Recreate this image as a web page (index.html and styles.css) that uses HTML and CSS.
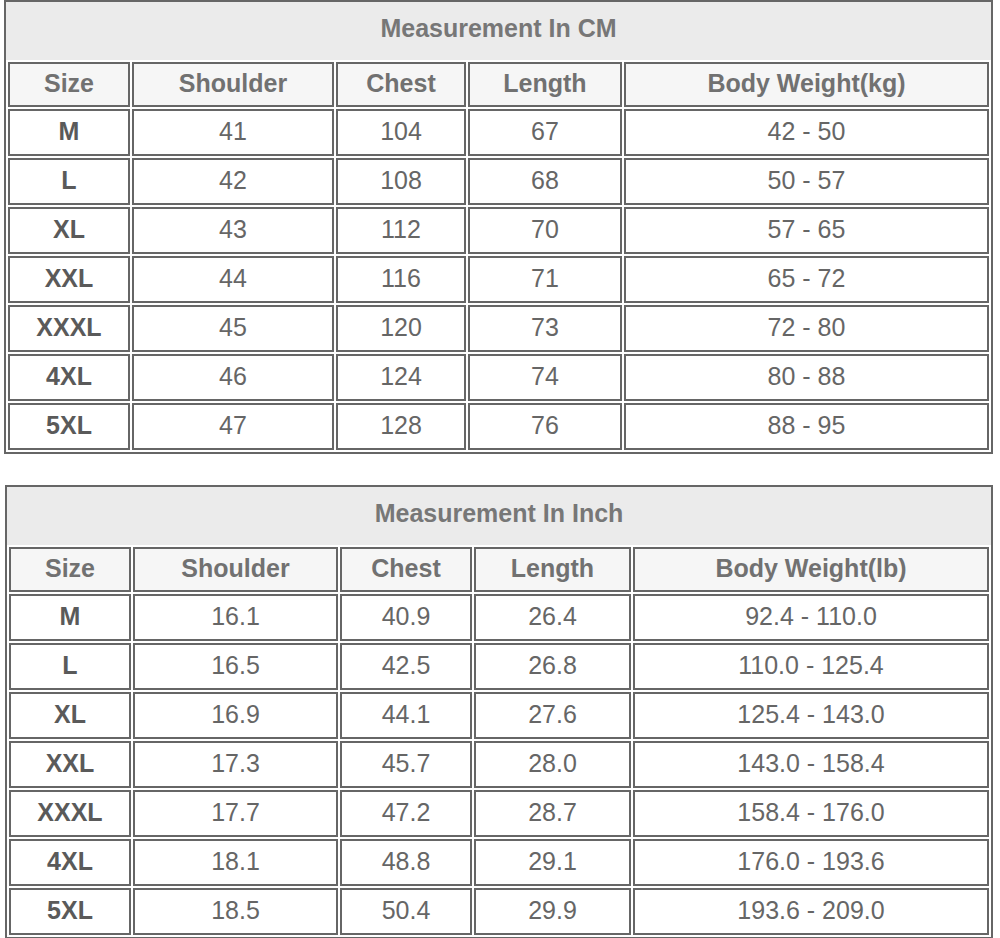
FILE: index.html
```html
<!DOCTYPE html>
<html lang="en">
<head>
<meta charset="utf-8">
<title>Size Chart</title>
<link rel="stylesheet" href="styles.css">
</head>
<body>
<div class="page">
  <section class="chart chart-cm">
    <div class="title">Measurement In CM</div>
    <table>
      <thead>
        <tr><th class="c-size">Size</th><th class="c-shoulder">Shoulder</th><th class="c-chest">Chest</th><th class="c-length">Length</th><th class="c-weight">Body Weight(kg)</th></tr>
      </thead>
      <tbody>
        <tr><td class="sz">M</td><td>41</td><td>104</td><td>67</td><td>42 - 50</td></tr>
        <tr><td class="sz">L</td><td>42</td><td>108</td><td>68</td><td>50 - 57</td></tr>
        <tr><td class="sz">XL</td><td>43</td><td>112</td><td>70</td><td>57 - 65</td></tr>
        <tr><td class="sz">XXL</td><td>44</td><td>116</td><td>71</td><td>65 - 72</td></tr>
        <tr><td class="sz">XXXL</td><td>45</td><td>120</td><td>73</td><td>72 - 80</td></tr>
        <tr><td class="sz">4XL</td><td>46</td><td>124</td><td>74</td><td>80 - 88</td></tr>
        <tr><td class="sz">5XL</td><td>47</td><td>128</td><td>76</td><td>88 - 95</td></tr>
      </tbody>
    </table>
  </section>

  <section class="chart chart-inch">
    <div class="title">Measurement In Inch</div>
    <table>
      <thead>
        <tr><th class="c-size">Size</th><th class="c-shoulder">Shoulder</th><th class="c-chest">Chest</th><th class="c-length">Length</th><th class="c-weight">Body Weight(lb)</th></tr>
      </thead>
      <tbody>
        <tr><td class="sz">M</td><td>16.1</td><td>40.9</td><td>26.4</td><td>92.4 - 110.0</td></tr>
        <tr><td class="sz">L</td><td>16.5</td><td>42.5</td><td>26.8</td><td>110.0 - 125.4</td></tr>
        <tr><td class="sz">XL</td><td>16.9</td><td>44.1</td><td>27.6</td><td>125.4 - 143.0</td></tr>
        <tr><td class="sz">XXL</td><td>17.3</td><td>45.7</td><td>28.0</td><td>143.0 - 158.4</td></tr>
        <tr><td class="sz">XXXL</td><td>17.7</td><td>47.2</td><td>28.7</td><td>158.4 - 176.0</td></tr>
        <tr><td class="sz">4XL</td><td>18.1</td><td>48.8</td><td>29.1</td><td>176.0 - 193.6</td></tr>
        <tr><td class="sz">5XL</td><td>18.5</td><td>50.4</td><td>29.9</td><td>193.6 - 209.0</td></tr>
      </tbody>
    </table>
  </section>
</div>
</body>
</html>
```
FILE: styles.css
```css
html, body {
  margin: 0;
  padding: 0;
  background: #ffffff;
}

body {
  font-family: "Liberation Sans", Arial, sans-serif;
  color: #666666;
}

.page {
  display: flex;
  flex-direction: column;
  gap: 31px;
  padding: 0 7px 0 4px;
}

.chart {
  border: 2px solid #666666;
  background: #ffffff;
}

.chart-inch {
  margin-left: 1px;
}

.title {
  box-sizing: border-box;
  height: 58px;
  padding-bottom: 5px;
  background: #ebebeb;
  display: flex;
  align-items: center;
  justify-content: center;
  font-weight: bold;
  font-size: 25px;
  color: #777777;
}

.chart table {
  width: 100%;
  table-layout: fixed;
  border-collapse: separate;
  border-spacing: 2px;
  margin: 0;
}

.chart th,
.chart td {
  box-sizing: border-box;
  border: 2px solid #666666;
  padding: 0 0 4px 0;
  text-align: center;
  vertical-align: middle;
  font-size: 25px;
  line-height: 28px;
}

.chart th {
  height: 45px;
  background: #f6f6f6;
  font-weight: bold;
  color: #717171;
}

.chart td {
  height: 47px;
  background: #ffffff;
  color: #666666;
}

.chart td.sz {
  font-weight: bold;
  color: #5a5a5a;
}

.chart-cm .c-size { width: 122px; }
.chart-cm .c-shoulder { width: 202px; }
.chart-cm .c-chest { width: 130px; }
.chart-cm .c-length { width: 154px; }
.chart-cm .c-weight { width: 365px; }

.chart-inch .c-size { width: 122px; }
.chart-inch .c-shoulder { width: 205px; }
.chart-inch .c-chest { width: 132px; }
.chart-inch .c-length { width: 157px; }
.chart-inch .c-weight { width: 356px; }
```
